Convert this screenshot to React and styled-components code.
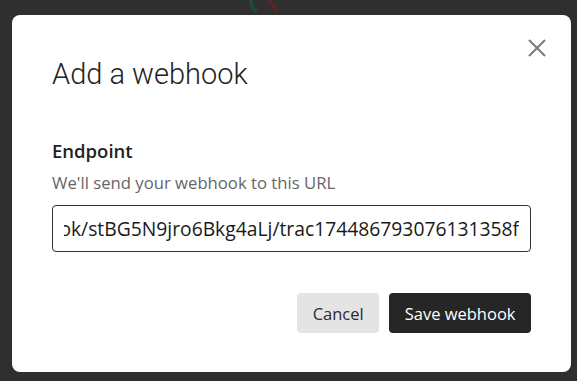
import React, { useEffect, useRef } from "react";
import styled, { createGlobalStyle } from "styled-components";

const GlobalStyle = createGlobalStyle`
  html, body {
    margin: 0;
    background: #2f2f2f;
    font-family: "Open Sans", "Noto Sans", sans-serif;
  }
  * { box-sizing: border-box; }
`;

const Backdrop = styled.div`
  position: relative;
  min-height: 100vh;
  padding: 15px 6px 9px 12px;
  overflow: hidden;
`;

const BgMark = styled.svg`
  position: absolute;
  left: 247px;
  top: -8px;
`;

const Modal = styled.div`
  position: relative;
  background: #fff;
  border-radius: 8px;
  height: 357px;
  padding: 41px 40px 39px;
  display: flex;
  flex-direction: column;
`;

const CloseButton = styled.button`
  position: absolute;
  top: 23px;
  right: 25px;
  width: 19px;
  height: 19px;
  padding: 0;
  border: 0;
  background: none;
  color: #7a7a7a;
  cursor: pointer;
  display: flex;
  align-items: center;
  justify-content: center;
`;

const Title = styled.h2`
  margin: 0;
  font-family: Roboto, "Open Sans", sans-serif;
  font-weight: 300;
  font-size: 29px;
  line-height: 36px;
  color: #222;
`;

const Field = styled.div`
  margin-top: 47px;
  display: flex;
  flex-direction: column;
`;

const Label = styled.label`
  font-size: 18.5px;
  font-weight: 600;
  line-height: 24px;
  color: #222;
`;

const Hint = styled.span`
  margin-top: 9px;
  font-size: 16.7px;
  line-height: 22px;
  color: #666;
`;

const UrlInput = styled.input`
  margin-top: 11px;
  height: 47px;
  width: 100%;
  padding: 0 11px;
  border: 1px solid #333;
  border-radius: 4px;
  font-family: inherit;
  font-size: 19.3px;
  color: #1a1a1a;
  background: #fff;
  outline: none;
`;

const Actions = styled.div`
  margin-top: auto;
  display: flex;
  justify-content: flex-end;
  gap: 10px;
`;

const Button = styled.button`
  height: 40px;
  padding: 0 15.5px;
  border: 0;
  border-radius: 4px;
  font-family: inherit;
  font-size: 16.5px;
  background: ${(p) => (p.$primary ? "#262626" : "#e4e4e4")};
  color: ${(p) => (p.$primary ? "#fff" : "#2a2a2a")};
  cursor: pointer;
`;

const url =
  "https://hooks.example.com/hook/stBG5N9jro6Bkg4aLj/trac174486793076131358f";

export default function App() {
  const inputRef = useRef(null);

  useEffect(() => {
    const el = inputRef.current;
    if (el) el.scrollLeft = el.scrollWidth;
  }, []);

  return (
    <>
      <GlobalStyle />
      <Backdrop>
        <BgMark width="34" height="24" viewBox="0 0 34 24">
          <path d="M6 2 C2 10, 4 16, 10 20" stroke="#1f4a3a" strokeWidth="4" fill="none" />
          <path d="M18 2 C22 8, 26 12, 30 20" stroke="#5a2424" strokeWidth="4" fill="none" />
        </BgMark>
        <Modal>
          <CloseButton aria-label="Close">
            <svg width="18" height="18" viewBox="0 0 18 18">
              <path d="M1 1 L17 17 M17 1 L1 17" stroke="currentColor" strokeWidth="2" />
            </svg>
          </CloseButton>
          <Title>Add a webhook</Title>
          <Field>
            <Label htmlFor="endpoint">Endpoint</Label>
            <Hint>We'll send your webhook to this URL</Hint>
            <UrlInput id="endpoint" ref={inputRef} defaultValue={url} />
          </Field>
          <Actions>
            <Button>Cancel</Button>
            <Button $primary>Save webhook</Button>
          </Actions>
        </Modal>
      </Backdrop>
    </>
  );
}
